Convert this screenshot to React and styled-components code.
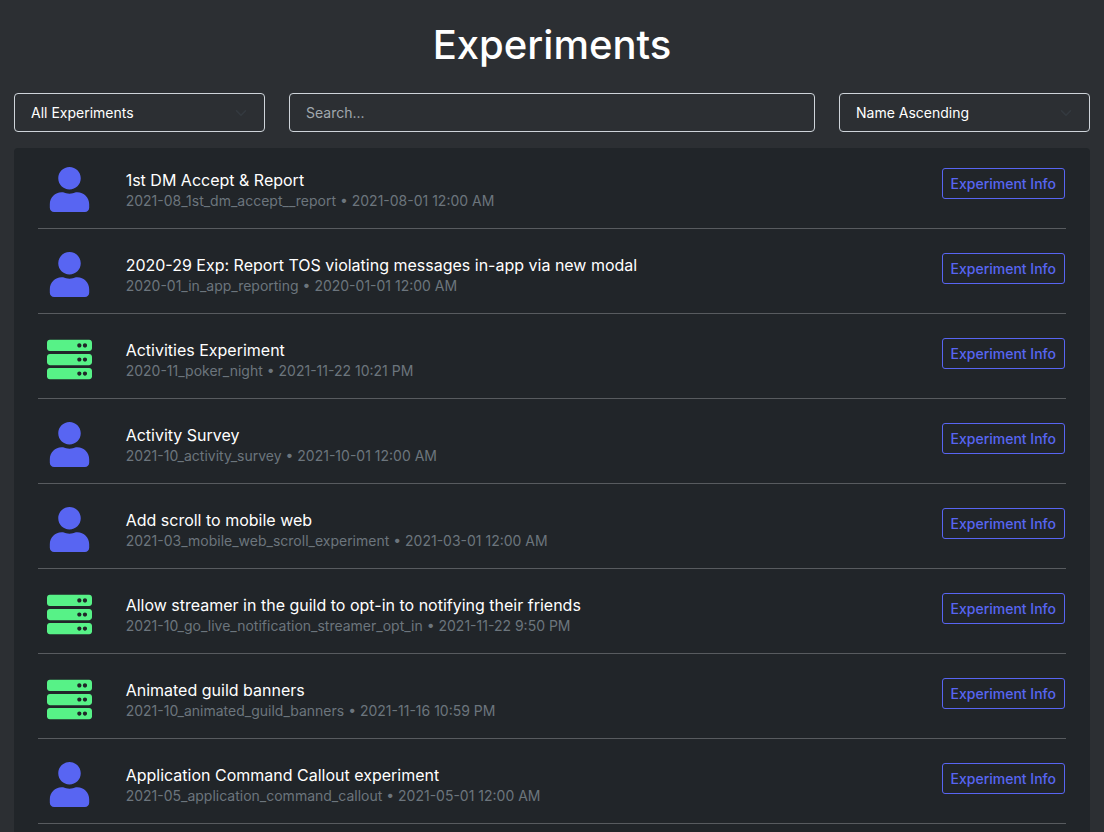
import React from "react";
import styled, { createGlobalStyle } from "styled-components";
import { FaUser, FaServer } from "react-icons/fa";

const GlobalStyle = createGlobalStyle`
  *, *::before, *::after { box-sizing: border-box; }
  body {
    margin: 0;
    background: #2c2f33;
    color: #fff;
    font-family: Inter, "Liberation Sans", sans-serif;
    font-size: 16px;
    font-weight: 400;
    line-height: 24px;
  }
`;

const Page = styled.main`
  padding: 21px 14px 0;
`;

const Title = styled.h1`
  margin: 0 0 24px;
  font-size: 40px;
  line-height: 48px;
  font-weight: 500;
  text-align: center;
`;

const Filters = styled.form`
  display: grid;
  grid-template-columns: repeat(12, minmax(0, 1fr));
  column-gap: 24px;
  margin-bottom: 16px;
`;

const Field = styled.label`
  grid-column: span ${(p) => p.$span};
  position: relative;
  display: block;
`;

const control = `
  display: block;
  width: 100%;
  height: 39px;
  margin: 0;
  padding: 0 16px;
  border: 1px solid #ced4da;
  border-radius: 4px;
  background: transparent;
  color: #fff;
  font: inherit;
  font-size: 14px;
  appearance: none;
  outline: none;
`;

const Select = styled.select`
  ${control}
  & option { background: #2c2f33; }
`;

const SearchInput = styled.input`
  ${control}
  &::placeholder { color: #a1a8ae; opacity: 1; }
`;

const Chevron = styled.svg`
  position: absolute;
  right: 18px;
  top: 14px;
  width: 12px;
  height: 12px;
  pointer-events: none;
`;

const List = styled.ul`
  margin: 0;
  padding: 12px 24px;
  list-style: none;
  background: #212529;
  border-radius: 4px;
`;

const Item = styled.li`
  display: grid;
  grid-template-columns: repeat(12, minmax(0, 1fr));
  column-gap: 24px;
  align-items: start;
  padding: 7px 0 16px;
  margin-bottom: 16px;
  border-bottom: 1px solid #585b5f;
`;

const IconCell = styled.span`
  display: flex;
  justify-content: center;
  font-size: 45px;
  color: ${(p) => (p.$kind === "guild" ? "#57f287" : "#5865f2")};
`;

const Details = styled.div`
  grid-column: span 8;
  padding-top: 1px;
`;

const Name = styled.div``;

const Meta = styled.div`
  font-size: 14px;
  line-height: 18px;
  color: #6c757d;
`;

const Action = styled.div`
  grid-column: span 3;
  display: flex;
  justify-content: flex-end;
  padding: 1px 1px 0 0;
`;

const InfoButton = styled.button`
  height: 31px;
  padding: 0 8px;
  border: 1px solid #5865f2;
  border-radius: 3px;
  background: transparent;
  color: #5865f2;
  font: inherit;
  font-size: 14px;
  font-weight: 500;
  white-space: nowrap;
  cursor: pointer;
`;

const experiments = [
  { kind: "user", name: "1st DM Accept & Report", id: "2021-08_1st_dm_accept__report", date: "2021-08-01 12:00 AM" },
  { kind: "user", name: "2020-29 Exp: Report TOS violating messages in-app via new modal", id: "2020-01_in_app_reporting", date: "2020-01-01 12:00 AM" },
  { kind: "guild", name: "Activities Experiment", id: "2020-11_poker_night", date: "2021-11-22 10:21 PM" },
  { kind: "user", name: "Activity Survey", id: "2021-10_activity_survey", date: "2021-10-01 12:00 AM" },
  { kind: "user", name: "Add scroll to mobile web", id: "2021-03_mobile_web_scroll_experiment", date: "2021-03-01 12:00 AM" },
  { kind: "guild", name: "Allow streamer in the guild to opt-in to notifying their friends", id: "2021-10_go_live_notification_streamer_opt_in", date: "2021-11-22 9:50 PM" },
  { kind: "guild", name: "Animated guild banners", id: "2021-10_animated_guild_banners", date: "2021-11-16 10:59 PM" },
  { kind: "user", name: "Application Command Callout experiment", id: "2021-05_application_command_callout", date: "2021-05-01 12:00 AM" },
];

function Dropdown({ label, options }) {
  return (
    <Field $span={3}>
      <Select aria-label={label}>
        {options.map((o) => (
          <option key={o}>{o}</option>
        ))}
      </Select>
      <Chevron viewBox="0 0 16 16" fill="none" stroke="#343a40" strokeWidth="2" strokeLinecap="round" strokeLinejoin="round" aria-hidden="true">
        <path d="M2 5l6 6 6-6" />
      </Chevron>
    </Field>
  );
}

export default function App() {
  return (
    <>
      <GlobalStyle />
      <Page>
        <Title>Experiments</Title>
        <Filters onSubmit={(e) => e.preventDefault()}>
          <Dropdown label="Filter" options={["All Experiments"]} />
          <Field $span={6}>
            <SearchInput type="text" placeholder="Search..." aria-label="Search" />
          </Field>
          <Dropdown label="Sort" options={["Name Ascending"]} />
        </Filters>
        <List>
          {experiments.map((e) => (
            <Item key={e.id}>
              <IconCell $kind={e.kind}>{e.kind === "guild" ? <FaServer /> : <FaUser />}</IconCell>
              <Details>
                <Name>{e.name}</Name>
                <Meta>
                  {e.id} • {e.date}
                </Meta>
              </Details>
              <Action>
                <InfoButton type="button">Experiment Info</InfoButton>
              </Action>
            </Item>
          ))}
        </List>
      </Page>
    </>
  );
}
